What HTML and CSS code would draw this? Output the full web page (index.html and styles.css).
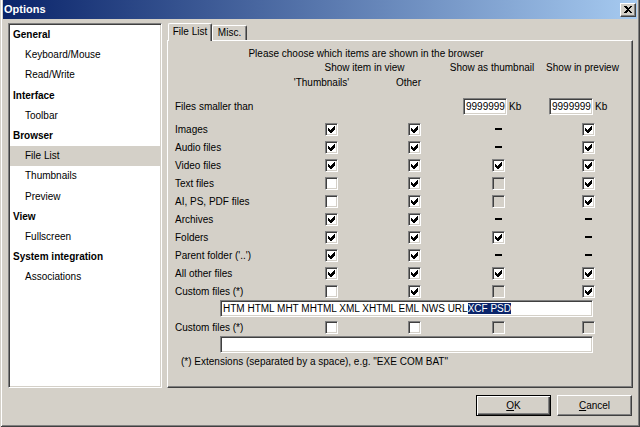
FILE: index.html
```html
<!DOCTYPE html>
<html>
<head>
<meta charset="utf-8">
<title>Options</title>
<link rel="stylesheet" href="styles.css">
</head>
<body>
<div class="window">
  <div class="titlebar">
    <span class="title">Options</span>
    <div class="close"><svg width="8" height="7" viewBox="0 0 8 7" shape-rendering="crispEdges"><path d="M0 0h2l2 2 2-2h2l-3 3.5 3 3.5h-2l-2-2-2 2h-2l3-3.5z" fill="#000"/></svg></div>
  </div>
  <div class="main">
    <div class="listbox">
      <div class="item head">General</div>
      <div class="item">Keyboard/Mouse</div>
      <div class="item">Read/Write</div>
      <div class="item head">Interface</div>
      <div class="item">Toolbar</div>
      <div class="item head">Browser</div>
      <div class="item sel">File List</div>
      <div class="item">Thumbnails</div>
      <div class="item">Preview</div>
      <div class="item head">View</div>
      <div class="item">Fullscreen</div>
      <div class="item head">System integration</div>
      <div class="item">Associations</div>
    </div>
    <div class="tabs">
      <div class="tabstrip">
        <div class="tab active">File List</div>
        <div class="tab">Misc.</div>
      </div>
      <div class="panel">
        <div class="hdr1">Please choose which items are shown in the browser</div>
        <div class="hdr2"><span></span><span class="c">Show item in view</span><span class="c">Show as thumbnail</span><span class="c">Show in preview</span></div>
        <div class="hdr3"><span></span><span class="c">'Thumbnails'</span><span class="c">Other</span></div>
        <div class="sizes">
          <span class="lbl">Files smaller than</span>
          <span class="sz"><span class="field num">9999999</span><span>Kb</span></span>
          <span class="sz"><span class="field num">9999999</span><span>Kb</span></span>
        </div>
        <div class="rows">
          <div class="row"><span class="lbl">Images</span>
            <span class="c"><span class="cb"><svg class="ck" viewBox="0 0 7 7"><path d="M0 2L2 4L6 0H7V3L3 7H2L0 5Z"/></svg></span></span>
            <span class="c"><span class="cb"><svg class="ck" viewBox="0 0 7 7"><path d="M0 2L2 4L6 0H7V3L3 7H2L0 5Z"/></svg></span></span>
            <span class="c"><span class="dash"></span></span>
            <span class="c"><span class="cb"><svg class="ck" viewBox="0 0 7 7"><path d="M0 2L2 4L6 0H7V3L3 7H2L0 5Z"/></svg></span></span>
          </div>
          <div class="row"><span class="lbl">Audio files</span>
            <span class="c"><span class="cb"><svg class="ck" viewBox="0 0 7 7"><path d="M0 2L2 4L6 0H7V3L3 7H2L0 5Z"/></svg></span></span>
            <span class="c"><span class="cb"><svg class="ck" viewBox="0 0 7 7"><path d="M0 2L2 4L6 0H7V3L3 7H2L0 5Z"/></svg></span></span>
            <span class="c"><span class="dash"></span></span>
            <span class="c"><span class="cb"><svg class="ck" viewBox="0 0 7 7"><path d="M0 2L2 4L6 0H7V3L3 7H2L0 5Z"/></svg></span></span>
          </div>
          <div class="row"><span class="lbl">Video files</span>
            <span class="c"><span class="cb"><svg class="ck" viewBox="0 0 7 7"><path d="M0 2L2 4L6 0H7V3L3 7H2L0 5Z"/></svg></span></span>
            <span class="c"><span class="cb"><svg class="ck" viewBox="0 0 7 7"><path d="M0 2L2 4L6 0H7V3L3 7H2L0 5Z"/></svg></span></span>
            <span class="c"><span class="cb"><svg class="ck" viewBox="0 0 7 7"><path d="M0 2L2 4L6 0H7V3L3 7H2L0 5Z"/></svg></span></span>
            <span class="c"><span class="cb"><svg class="ck" viewBox="0 0 7 7"><path d="M0 2L2 4L6 0H7V3L3 7H2L0 5Z"/></svg></span></span>
          </div>
          <div class="row"><span class="lbl">Text files</span>
            <span class="c"><span class="cb"></span></span>
            <span class="c"><span class="cb"><svg class="ck" viewBox="0 0 7 7"><path d="M0 2L2 4L6 0H7V3L3 7H2L0 5Z"/></svg></span></span>
            <span class="c"><span class="cb dis"></span></span>
            <span class="c"><span class="cb"><svg class="ck" viewBox="0 0 7 7"><path d="M0 2L2 4L6 0H7V3L3 7H2L0 5Z"/></svg></span></span>
          </div>
          <div class="row"><span class="lbl">AI, PS, PDF files</span>
            <span class="c"><span class="cb"></span></span>
            <span class="c"><span class="cb"><svg class="ck" viewBox="0 0 7 7"><path d="M0 2L2 4L6 0H7V3L3 7H2L0 5Z"/></svg></span></span>
            <span class="c"><span class="cb dis"></span></span>
            <span class="c"><span class="cb"><svg class="ck" viewBox="0 0 7 7"><path d="M0 2L2 4L6 0H7V3L3 7H2L0 5Z"/></svg></span></span>
          </div>
          <div class="row"><span class="lbl">Archives</span>
            <span class="c"><span class="cb"><svg class="ck" viewBox="0 0 7 7"><path d="M0 2L2 4L6 0H7V3L3 7H2L0 5Z"/></svg></span></span>
            <span class="c"><span class="cb"><svg class="ck" viewBox="0 0 7 7"><path d="M0 2L2 4L6 0H7V3L3 7H2L0 5Z"/></svg></span></span>
            <span class="c"><span class="dash"></span></span>
            <span class="c"><span class="dash"></span></span>
          </div>
          <div class="row"><span class="lbl">Folders</span>
            <span class="c"><span class="cb"><svg class="ck" viewBox="0 0 7 7"><path d="M0 2L2 4L6 0H7V3L3 7H2L0 5Z"/></svg></span></span>
            <span class="c"><span class="cb"><svg class="ck" viewBox="0 0 7 7"><path d="M0 2L2 4L6 0H7V3L3 7H2L0 5Z"/></svg></span></span>
            <span class="c"><span class="cb"><svg class="ck" viewBox="0 0 7 7"><path d="M0 2L2 4L6 0H7V3L3 7H2L0 5Z"/></svg></span></span>
            <span class="c"><span class="dash"></span></span>
          </div>
          <div class="row"><span class="lbl">Parent folder ('..')</span>
            <span class="c"><span class="cb"><svg class="ck" viewBox="0 0 7 7"><path d="M0 2L2 4L6 0H7V3L3 7H2L0 5Z"/></svg></span></span>
            <span class="c"><span class="cb"><svg class="ck" viewBox="0 0 7 7"><path d="M0 2L2 4L6 0H7V3L3 7H2L0 5Z"/></svg></span></span>
            <span class="c"><span class="dash"></span></span>
            <span class="c"><span class="dash"></span></span>
          </div>
          <div class="row"><span class="lbl">All other files</span>
            <span class="c"><span class="cb"><svg class="ck" viewBox="0 0 7 7"><path d="M0 2L2 4L6 0H7V3L3 7H2L0 5Z"/></svg></span></span>
            <span class="c"><span class="cb"><svg class="ck" viewBox="0 0 7 7"><path d="M0 2L2 4L6 0H7V3L3 7H2L0 5Z"/></svg></span></span>
            <span class="c"><span class="cb"><svg class="ck" viewBox="0 0 7 7"><path d="M0 2L2 4L6 0H7V3L3 7H2L0 5Z"/></svg></span></span>
            <span class="c"><span class="cb"><svg class="ck" viewBox="0 0 7 7"><path d="M0 2L2 4L6 0H7V3L3 7H2L0 5Z"/></svg></span></span>
          </div>
          <div class="row"><span class="lbl">Custom files (*)</span>
            <span class="c"><span class="cb"></span></span>
            <span class="c"><span class="cb"><svg class="ck" viewBox="0 0 7 7"><path d="M0 2L2 4L6 0H7V3L3 7H2L0 5Z"/></svg></span></span>
            <span class="c"><span class="cb dis"></span></span>
            <span class="c"><span class="cb"><svg class="ck" viewBox="0 0 7 7"><path d="M0 2L2 4L6 0H7V3L3 7H2L0 5Z"/></svg></span></span>
          </div>
        </div>
        <div class="field ext">HTM HTML MHT MHTML XML XHTML EML NWS URL <span class="hl">XCF PSD</span></div>
        <div class="row row2"><span class="lbl">Custom files (*)</span>
          <span class="c"><span class="cb"></span></span>
          <span class="c"><span class="cb"></span></span>
          <span class="c"><span class="cb dis"></span></span>
          <span class="c"><span class="cb dis"></span></span>
        </div>
        <div class="field ext"></div>
        <div class="note">(*) Extensions (separated by a space), e.g. "EXE COM BAT"</div>
      </div>
    </div>
  </div>
  <div class="buttons">
    <div class="btn default"><span><u>O</u>K</span></div>
    <div class="btn"><span><u>C</u>ancel</span></div>
  </div>
</div>
</body>
</html>
```
FILE: styles.css
```css
html, body {
  margin: 0;
  padding: 0;
  background: #d4d0c8;
}
body {
  font-family: "Liberation Sans", Arial, sans-serif;
  font-size: 10px;
  color: #000;
}
.window {
  width: 640px;
  height: 427px;
  box-sizing: border-box;
  padding: 0 3px 3px;
  background: #d4d0c8;
  box-shadow: inset 1px 0 #d4d0c8, inset -1px -1px #404040, inset 2px 0 #fff, inset -2px -2px #808080;
  display: flex;
  flex-direction: column;
}
.titlebar {
  height: 19px;
  box-sizing: border-box;
  background: linear-gradient(to right, #0a246a, #a6caf0);
  display: flex;
  align-items: center;
  justify-content: space-between;
  padding: 0 1px 0 1px;
}
.title {
  color: #fff;
  font-weight: bold;
  font-size: 11px;
  padding-bottom: 1px;
}
.close {
  width: 16px;
  height: 14px;
  box-sizing: border-box;
  background: #d4d0c8;
  border: 1px solid;
  border-color: #fff #404040 #404040 #fff;
  box-shadow: inset -1px -1px #808080;
  display: flex;
  align-items: center;
  justify-content: center;
  padding: 0 1px 1px 0;
}
.main {
  display: flex;
  gap: 5px;
  margin-top: 4px;
  padding-left: 5px;
  height: 365px;
}
.listbox {
  width: 154px;
  height: 365px;
  box-sizing: border-box;
  background: #fff;
  border: 1px solid;
  border-color: #808080 #fff #fff #808080;
  box-shadow: inset 1px 1px #404040, inset -1px -1px #d4d0c8;
  padding: 1px;
}
.item {
  height: 20.2px;
  box-sizing: border-box;
  display: flex;
  align-items: center;
  padding: 0 0 1px 15px;
  white-space: nowrap;
}
.item.head {
  font-weight: bold;
  padding-left: 3px;
}
.item.sel {
  background: #d4d0c8;
}
.tabs {
  width: 466px;
  display: flex;
  flex-direction: column;
}
.tabstrip {
  height: 17px;
  display: flex;
  align-items: flex-end;
  padding-left: 1px;
}
.tab {
  box-sizing: border-box;
  height: 15px;
  width: 35px;
  background: #d4d0c8;
  border: 1px solid;
  border-bottom: none;
  border-color: #fff #404040 #404040 #fff;
  box-shadow: inset -1px 0 #808080;
  border-radius: 2px 2px 0 0;
  display: flex;
  justify-content: center;
  align-items: center;
  padding-bottom: 1px;
  white-space: nowrap;
}
.tab.active {
  height: 18px;
  width: 44px;
  margin-bottom: -1px;
  position: relative;
  z-index: 1;
  padding-bottom: 3px;
}
.panel {
  flex: 1;
  box-sizing: border-box;
  border: 1px solid;
  border-color: #fff #404040 #404040 #fff;
  box-shadow: inset -1px -1px #808080;
  padding: 6px 0 0 7px;
  display: flex;
  flex-direction: column;
}
.hdr1 {
  width: 382px;
  text-align: center;
  line-height: 14px;
  height: 14px;
  white-space: nowrap;
}
.hdr2, .hdr3 {
  display: grid;
  height: 14px;
  line-height: 14px;
  white-space: nowrap;
}
.hdr2 {
  grid-template-columns: 116px 147px 108px 73px;
}
.hdr3 {
  grid-template-columns: 116px 61px 113px;
  margin-top: 1px;
}
.c {
  display: flex;
  justify-content: center;
  align-items: center;
}
.sizes {
  display: grid;
  grid-template-columns: 288px 86px auto;
  align-items: center;
  height: 17px;
  margin-top: 8px;
}
.sz {
  display: flex;
  align-items: center;
  gap: 2px;
}
.field {
  box-sizing: border-box;
  height: 17px;
  background: #fff;
  border: 1px solid;
  border-color: #808080 #fff #fff #808080;
  box-shadow: inset 1px 1px #404040, inset -1px -1px #d4d0c8;
  white-space: nowrap;
  display: flex;
  align-items: center;
  padding: 0 2px 1px;
}
.num {
  width: 44px;
}
.rows {
  margin-top: 5px;
}
.row {
  display: grid;
  grid-template-columns: 116px 81px 85px 83px 97px;
  height: 18px;
  align-items: center;
  white-space: nowrap;
}
.row2 {
  margin-top: 1px;
}
.cb {
  width: 13px;
  height: 13px;
  box-sizing: border-box;
  background: #fff;
  border: 1px solid;
  border-color: #808080 #fff #fff #808080;
  box-shadow: inset 1px 1px #404040, inset -1px -1px #d4d0c8;
  display: flex;
  align-items: center;
  justify-content: center;
}
.cb.dis {
  background: #d4d0c8;
}
.ck {
  width: 7px;
  height: 7px;
  shape-rendering: crispEdges;
  fill: #000;
}
.dash {
  width: 7px;
  height: 2px;
  background: #000;
}
.ext {
  width: 373px;
  margin-left: 45px;
  padding-left: 2px;
}
.hl {
  background: #0a246a;
  color: #fff;
}
.note {
  margin-top: 2px;
  padding-left: 6px;
  line-height: 14px;
  white-space: nowrap;
}
.buttons {
  display: flex;
  justify-content: flex-end;
  gap: 6px;
  margin-top: 7px;
  padding-right: 5px;
}
.btn {
  width: 75px;
  height: 21px;
  box-sizing: border-box;
  background: #d4d0c8;
  border: 1px solid;
  border-color: #fff #404040 #404040 #fff;
  box-shadow: inset -1px -1px #808080;
  display: flex;
  align-items: center;
  justify-content: center;
  padding-bottom: 1px;
}
.btn.default {
  border: 1px solid #000;
  box-shadow: inset 1px 1px #fff, inset -1px -1px #404040, inset -2px -2px #808080;
}
```
